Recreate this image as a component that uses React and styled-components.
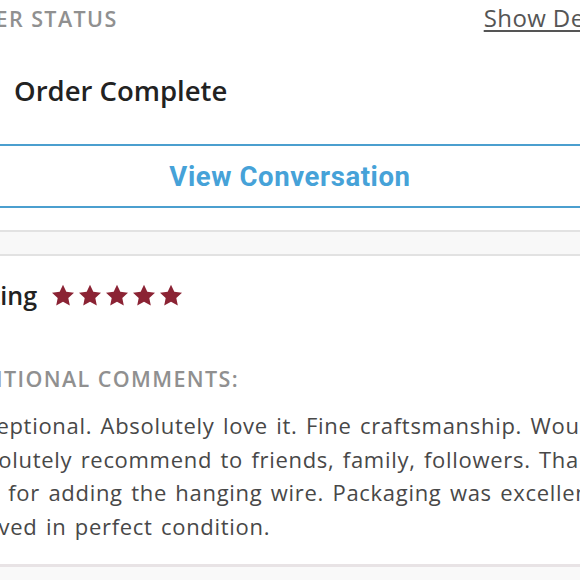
import React from "react";
import styled, { createGlobalStyle } from "styled-components";

const Global = createGlobalStyle`
  html, body {
    margin: 0;
    padding: 0;
    background: #ffffff;
    overflow: hidden;
  }
  body {
    font-family: "Open Sans", "Noto Sans", sans-serif;
  }
`;

const Page = styled.div`
  width: 580px;
  height: 580px;
  overflow: hidden;
  background: #ffffff;
`;

const Sheet = styled.div`
  width: 660px;
  margin-left: -40px;
`;

const HeadRow = styled.div`
  display: flex;
  justify-content: space-between;
  align-items: baseline;
  padding-top: 1px;
  height: 43px;
`;

const Eyebrow = styled.div`
  font-size: 21.5px;
  font-weight: 600;
  letter-spacing: 1.4px;
  text-transform: uppercase;
  color: #909090;
  margin-left: ${(p) => p.$indent || 0}px;
`;

const DetailsLink = styled.a`
  font-size: 24px;
  letter-spacing: 0.4px;
  color: #555555;
  text-decoration: underline;
  text-underline-offset: 3px;
  margin-right: -12px;
  cursor: pointer;
`;

const Status = styled.div`
  font-size: 27.5px;
  font-weight: 600;
  color: #222222;
  margin: 28px 0 0 54px;
  height: 72px;
`;

const ConvoButton = styled.button`
  display: block;
  width: 100%;
  height: 64px;
  background: #ffffff;
  border: none;
  border-top: 2px solid #4b9fcf;
  border-bottom: 2px solid #4b9fcf;
  font-family: Roboto, "Liberation Sans", sans-serif;
  font-size: 27.5px;
  font-weight: 700;
  letter-spacing: 0.6px;
  color: #46a2d8;
  text-align: center;
  cursor: pointer;
`;

const Band = styled.div`
  margin-top: 22px;
  height: 22px;
  background: #f8f8f8;
  border-top: 2px solid #e2e2e2;
  border-bottom: 2px solid #e2e2e2;
`;

const RatingRow = styled.div`
  display: flex;
  align-items: center;
  gap: 14px;
  margin-top: 24px;
  height: 30px;
`;

const RatingLabel = styled.div`
  font-size: 25px;
  font-weight: 600;
  color: #222222;
`;

const Stars = styled.div`
  display: flex;
  gap: 3px;
`;

const Section = styled.div`
  margin-top: 54px;
`;

const Comment = styled.p`
  margin: 16px 0 0;
  white-space: nowrap;
  font-size: 22px;
  line-height: 33.5px;
  letter-spacing: 0.7px;
  word-spacing: 2px;
  color: #484848;
`;

const Footer = styled.div`
  margin-top: 21px;
  height: 60px;
  background: #f9f9f9;
  border-top: 3px solid #e8e3e5;
`;

const Star = () => (
  <svg width="24" height="23" viewBox="0 0 24 23">
    <path
      d="M12 0.8l3.3 7 7.7 0.9-5.7 5.3 1.5 7.6L12 17.8l-6.8 3.8 1.5-7.6L1 8.7l7.7-0.9z"
      fill="#8b2334"
    />
  </svg>
);

export default function App() {
  return (
    <Page>
      <Global />
      <Sheet>
        <HeadRow>
          <Eyebrow $indent={-15}>Order Status</Eyebrow>
          <DetailsLink>Show Details</DetailsLink>
        </HeadRow>
        <Status>Order Complete</Status>
        <ConvoButton>View Conversation</ConvoButton>
        <Band />
        <RatingRow>
          <RatingLabel>Rating</RatingLabel>
          <Stars>
            {[0, 1, 2, 3, 4].map((i) => (
              <Star key={i} />
            ))}
          </Stars>
        </RatingRow>
        <Section>
          <Eyebrow $indent={-14}>Additional Comments:</Eyebrow>
          <Comment>
            Exceptional. Absolutely love it. Fine craftsmanship. Would
            <br />
            absolutely recommend to friends, family, followers. Thank
            <br />
            you for adding the hanging wire. Packaging was excellent
            <br />
            arrived in perfect condition.
          </Comment>
        </Section>
        <Footer />
      </Sheet>
    </Page>
  );
}
